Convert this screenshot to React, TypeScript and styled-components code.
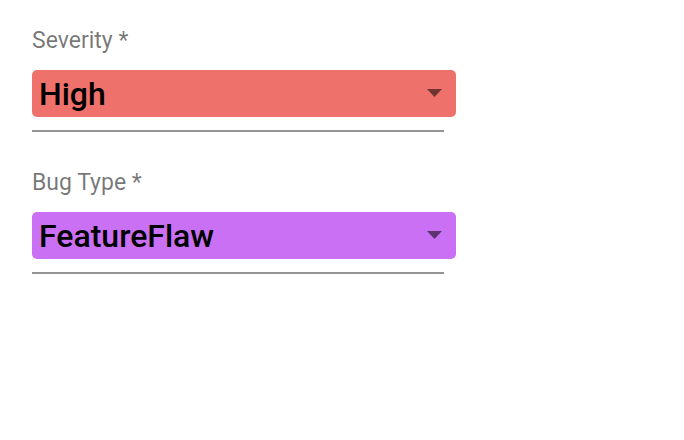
import styled, { createGlobalStyle } from "styled-components";

const GlobalStyle = createGlobalStyle`
  html, body {
    margin: 0;
    padding: 0;
    background: #ffffff;
  }
  body {
    font-family: Roboto, "Noto Sans", Arial, sans-serif;
  }
`;

const fields = [
  { label: "Severity", value: "High", color: "#ee716b" },
  { label: "Bug Type", value: "FeatureFlaw", color: "#c970f5" },
];

const App = () => {
  return (
    <>
      <GlobalStyle />
      <Page>
        {fields.map((field) => (
          <Field key={field.label}>
            <Label>{field.label} *</Label>
            <SelectBox color={field.color}>
              <Value>{field.value}</Value>
              <Arrow viewBox="0 0 15 8">
                <path d="M0 0h15L7.5 8z" />
              </Arrow>
            </SelectBox>
            <Underline />
          </Field>
        ))}
      </Page>
    </>
  );
};

const Page = styled.div`
  padding: 28px 0 0 32px;
  display: flex;
  flex-direction: column;
  gap: 38px;
`;

const Field = styled.div`
  display: flex;
  flex-direction: column;
  width: 424px;
`;

const Label = styled.div`
  font-size: 23px;
  line-height: 26px;
  color: rgba(0, 0, 0, 0.54);
  margin-bottom: 16px;
`;

const SelectBox = styled.div<{ color: string }>`
  height: 47px;
  background: ${(props) => props.color};
  border-radius: 5px;
  display: flex;
  align-items: center;
  justify-content: space-between;
  padding: 0 14px 0 7px;
`;

const Value = styled.span`
  font-size: 32px;
  font-weight: 500;
  color: #000000;
`;

const Arrow = styled.svg`
  width: 15px;
  height: 8px;
  fill: rgba(0, 0, 0, 0.54);
  margin-top: -2px;
`;

const Underline = styled.div`
  width: 412px;
  height: 2px;
  background: rgba(0, 0, 0, 0.42);
  margin-top: 13px;
`;

export default App;
